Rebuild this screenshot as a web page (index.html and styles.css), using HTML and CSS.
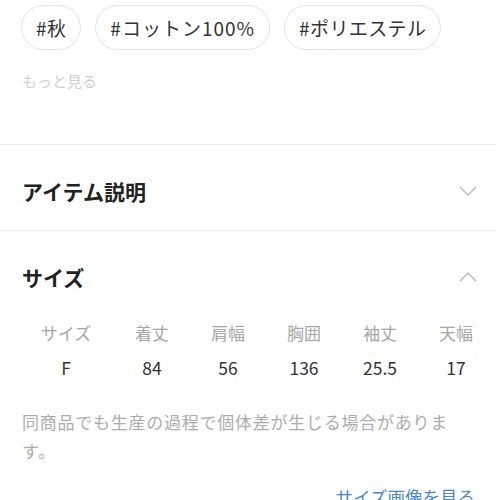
FILE: index.html
```html
<!DOCTYPE html>
<html lang="ja">
<head>
<meta charset="UTF-8">
<meta name="viewport" content="width=device-width, initial-scale=1.0">
<title>アイテム詳細</title>
<link rel="stylesheet" href="styles.css">
</head>
<body>
<div class="page">
  <div class="tags">
    <span class="tag">#秋</span>
    <span class="tag wide">#コットン100%</span>
    <span class="tag">#ポリエステル</span>
  </div>
  <div class="more">もっと見る</div>

  <!-- item description (closed) -->
  <div class="section">
    <div class="section-head">
      <h3>アイテム説明</h3>
      <svg class="chevron" width="18" height="10" viewBox="0 0 18 10"><path d="M1 1 L9 9 L17 1" fill="none" stroke="#bdbdbd" stroke-width="1.5"/></svg>
    </div>
  </div>

  <!-- size (open) -->
  <div class="section open">
    <div class="section-head">
      <h3>サイズ</h3>
      <svg class="chevron" width="18" height="10" viewBox="0 0 18 10"><path d="M1 9 L9 1 L17 9" fill="none" stroke="#bdbdbd" stroke-width="1.5"/></svg>
    </div>
    <div class="size-table">
      <div class="th">サイズ</div>
      <div class="th">着丈</div>
      <div class="th">肩幅</div>
      <div class="th">胸囲</div>
      <div class="th">袖丈</div>
      <div class="th">天幅</div>
      <div class="td">F</div>
      <div class="td">84</div>
      <div class="td">56</div>
      <div class="td">136</div>
      <div class="td">25.5</div>
      <div class="td">17</div>
    </div>
    <p class="note">同商品でも生産の過程で個体差が生じる場合があります。</p>
    <div class="link-row"><a href="#" class="size-link">サイズ画像を見る</a></div>
  </div>
</div>
</body>
</html>
```

FILE: styles.css
```css
body {
  margin: 0;
  background-color: #ffffff;
  font-family: "Noto Sans CJK JP", "Noto Sans", sans-serif;
  color: #333;
  overflow: hidden;
}
.page {
  width: 496px;
}
.tags {
  display: flex;
  gap: 14px;
  padding: 5px 0 0 21px;
}
.tag {
  display: flex;
  align-items: center;
  height: 43px;
  padding: 0 14px;
  border: 1px solid #e4e4e4;
  border-radius: 23px;
  font-size: 19px;
  letter-spacing: 0.4px;
  color: #333;
}
.tag.wide {
  letter-spacing: 1px;
}
.more {
  margin-top: 21px;
  padding-left: 22px;
  font-size: 15px;
  line-height: 20px;
  color: #cfcfcf;
}
.section {
  margin-top: 53px;
  border-top: 1px solid #ececec;
}
.section.open {
  margin-top: 0;
}
.section-head {
  display: flex;
  justify-content: space-between;
  align-items: center;
  padding: 31px 19px 24px 22px;
}
.section.open .section-head {
  padding-top: 31px;
  padding-bottom: 0;
}
.section-head h3 {
  margin: 0;
  font-size: 21px;
  line-height: 30px;
  font-weight: bold;
  color: #222;
}
.size-table {
  display: grid;
  grid-template-columns: 96px repeat(5, 76px);
  margin: 29px 0 0 18px;
  text-align: center;
}
.th {
  font-size: 17px;
  line-height: 24px;
  color: #a6a6a6;
}
.td {
  margin-top: 11px;
  font-size: 17.5px;
  line-height: 24px;
  color: #333;
}
.note {
  width: 456px;
  margin: 27px 0 0 22px;
  font-size: 17px;
  line-height: 29px;
  letter-spacing: 0.75px;
  color: #acacac;
}
.link-row {
  display: flex;
  justify-content: flex-end;
  padding: 20px 21px 0 0;
}
.size-link {
  font-size: 17.5px;
  line-height: 24px;
  color: #4a86c6;
  text-decoration: none;
}
```
